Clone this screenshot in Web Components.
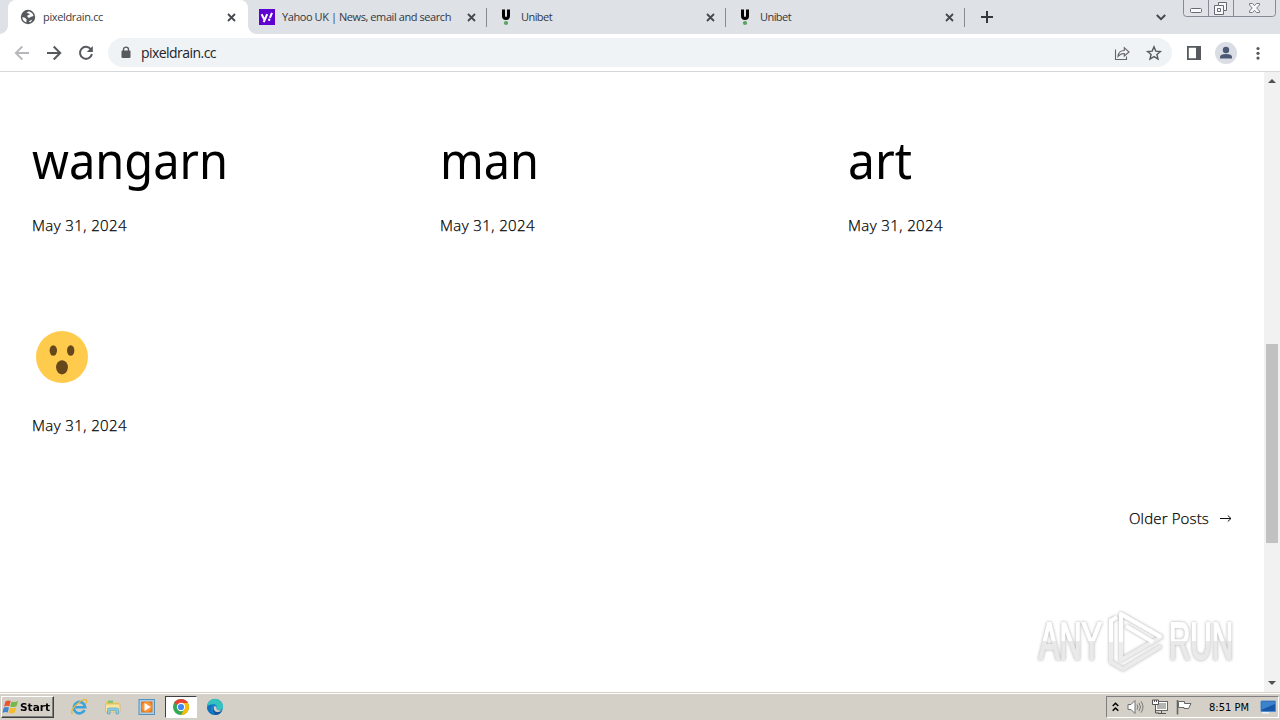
<!DOCTYPE html>
<html lang="en">
<head>
<meta charset="utf-8">
<title>pixeldrain.cc</title>
<style>
  html, body { margin: 0; height: 100%; overflow: hidden; }
  body { font-family: "Noto Sans", "Open Sans", sans-serif; background: #fff; }
</style>
</head>
<body>
<desktop-screen>
  <tab-strip slot="browser">
    <browser-tab active icon="globe" label="pixeldrain.cc" fit="60"></browser-tab>
    <browser-tab icon="yahoo" label="Yahoo UK | News, email and search" fit="169"></browser-tab>
    <browser-tab icon="unibet" label="Unibet" fit="31"></browser-tab>
    <browser-tab icon="unibet" label="Unibet" fit="31"></browser-tab>
  </tab-strip>
  <browser-toolbar slot="browser">pixeldrain.cc</browser-toolbar>
  <page-view slot="browser">
    <post-card date="May 31, 2024"><fit-text stretch width="196">wangarn</fit-text></post-card>
    <post-card date="May 31, 2024"><fit-text stretch width="99">man</fit-text></post-card>
    <post-card date="May 31, 2024"><fit-text stretch width="64">art</fit-text></post-card>
    <post-card date="May 31, 2024"><ui-icon name="wow"></ui-icon></post-card>
    <fit-text slot="older" width="80">Older Posts</fit-text>
  </page-view>
  <task-bar slot="taskbar"></task-bar>
</desktop-screen>

<script>
const ICONS = {
  globe: [16, 16, `<circle cx="8" cy="8" r="7.2" fill="#56595d"/>
    <path d="M2.3 8.2 4.5 8.5 6.6 10.3 6.3 13.4Q2.5 12 2.3 8.2ZM6.5 3.8 9 2.3 12.3 4.3 13.6 7.1 11.1 7.8 9 9.1 7.3 7.8 7.6 6.2 9.7 5.8 9.3 4.7ZM8.8 12.7 10.6 11.2 12.5 10.8 10.3 13.3Z" fill="#fff"/>`],
  yahoo: [16, 16, `<path d="M0 0H16V16H0Z" fill="#5f01d1"/><path d="M2.6 5.2 5.2 10.4M8.2 5.2 4.7 13.2M10.9 8.8 13 3.8" fill="none" stroke="#fff" stroke-width="2.1"/><circle cx="10.2" cy="10.7" r="1.2" fill="#fff"/>`],
  unibet: [16, 16, `<path d="M4 .5H7V6.5Q7 8 8 8T9 6.5V.5H12V7Q12 11 8 11T4 7Z"/><circle cx="8" cy="14" r="2.1" fill="#57a45f"/>`],
  close: [9, 9, `<path d="M1 1 8 8M8 1 1 8" stroke="#45484d" stroke-width="1.8"/>`],
  plus: [12, 12, `<path d="M6 0V12M0 6H12" stroke="#34373d" stroke-width="2"/>`],
  chevron: [10, 7, `<path d="M.8 1 5 5.2 9.2 1" fill="none" stroke="#42454c" stroke-width="1.9"/>`],
  back: [16, 16, `<path d="M15 8H2M8.3 1.5 1.8 8 8.3 14.5" fill="none" stroke="#b5b7ba" stroke-width="1.8"/>`],
  forward: [16, 16, `<path d="M1 8H14M7.7 1.5 14.2 8 7.7 14.5" fill="none" stroke="#56595d" stroke-width="2"/>`],
  reload: [16, 16, `<path d="M13 4.5A6 6 0 1 0 13.9 9" fill="none" stroke="#56595d" stroke-width="2"/><path d="M14.8 1V7H8.8Z" fill="#56595d"/>`],
  lock: [10, 13, `<path d="M2.5 5V3.6a2.5 2.5 0 0 1 5 0V5" fill="none" stroke="#56595d" stroke-width="1.4"/><rect x=".5" y="4.6" width="9" height="7.4" rx="1" fill="#56595d"/>`],
  share: [16, 16, `<path d="M1.5 4.5V14.5H12.5V11.5M4 11.5Q4.5 5.5 10.3 5.5V2.7L15 7 10.3 11V8.5Q6.4 8.4 4 11.5Z" fill="none" stroke="#62656a" stroke-width="1.1"/>`],
  star: [16, 16, `<path d="m8 1.8 1.8 4.3 4.6.4-3.5 3 1.1 4.6L8 11.6l-4 2.5 1.1-4.6-3.5-3 4.6-.4Z" fill="none" stroke="#56595d" stroke-width="1.4"/>`],
  panel: [14, 14, `<path d="M.9.9H13.1V13.1H.9Z" fill="#fff" stroke="#56595d" stroke-width="1.8"/><path d="M9 0H14V14H9Z" fill="#56595d"/>`],
  avatar: [22, 22, `<circle cx="11" cy="11" r="11" fill="#dadde3"/><circle cx="11" cy="8" r="3.2" fill="#4d5874"/><path d="M5 16.5V15Q5 12 11 12T17 15V16.5Z" fill="#4d5874"/>`],
  dots: [4, 14, `<circle cx="2" cy="2.5" r="1.6" fill="#56595d"/><circle cx="2" cy="7.3" r="1.6" fill="#56595d"/><circle cx="2" cy="12.1" r="1.6" fill="#56595d"/>`],
  windowbuttons: [97, 17, `<path d="M.5 0V13.5Q.5 16.5 3.5 16.5H89.5Q92.5 16.5 92.5 13.5V0" fill="#e0e2e7" stroke="#868a94"/><path d="M25.5 0V16M50.5 0V16" stroke="#868a94"/>
    <rect x="7.5" y="8.5" width="11" height="4" rx="1" fill="#f8f9fa" stroke="#666a73"/>
    <path d="M35.5 2.5H43.5V10.5H40.5V14.5H31.5V5.5H35.5Z" fill="#f8f9fa" stroke="#666a73"/><path d="M35.5 5.5H40.5V10.5M34.5 8.5H37.5V11.5H34.5Z" fill="none" stroke="#666a73"/>
    <path d="M66.5 3.5H69.5L71.5 5.7 73.5 3.5H76.5V5L73.7 8 76.5 11V12.5H73.5L71.5 10.3 69.5 12.5H66.5V11L69.3 8 66.5 5Z" fill="#f8f9fa" stroke="#777b84"/>`],
  wow: [52, 52, `<circle cx="26" cy="26" r="26" fill="#ffcb4c"/><ellipse cx="17.3" cy="19.5" rx="3.7" ry="5.2" fill="#65471b"/><ellipse cx="34.7" cy="19.5" rx="3.7" ry="5.2" fill="#65471b"/><ellipse cx="26" cy="36.3" rx="5.9" ry="7.1" fill="#65471b"/>`],
  arrow: [12, 9, `<path d="M0 4.5H11M7.8 1.5 11 4.5 7.8 7.5" fill="none" stroke="#111"/>`],
  up: [8, 4, `<path d="M4 0 8 4H0Z" fill="#505050"/>`],
  down: [8, 4, `<path d="M0 0H8L4 4Z" fill="#505050"/>`],
  windows: [16, 16, `<path d="M2.5 2.5Q5 .8 7.7 2L6.3 7.2Q3.8 6 1 7.7Z" fill="#e8552d"/><path d="M8.7 2.4Q11.5 3.8 15 2L13.5 7.3Q10.4 8.8 7.2 7.5Z" fill="#75b843"/><path d="M.7 8.8Q3.5 7.2 6 8.4L4.7 13.4Q2 12.4-.5 14Z" fill="#3f86cf"/><path d="M7 8.7Q10 10 13.2 8.5L11.8 13.6Q8.8 15.2 5.6 13.7Z" fill="#f5bd2c"/>`],
  ie: [18, 18, `<path d="M14.6 12.2A5.7 5.7 0 1 1 15.2 9.3H4.5" fill="none" stroke="#3ba2dc" stroke-width="2.6"/><path d="M2.6 16Q-.3 13.3 6 7T16.2 1.7Q17.7 3 15.3 6" fill="none" stroke="#e5b83d" stroke-width="1.3"/>`],
  folder: [18, 18, `<path d="M2 3H7L8 4.5H15.5V13H2Z" fill="#edca63"/><path d="M4 2.5H9V5H4Z" fill="#7fc577"/><path d="M1.5 6H16V14H1.5Z" fill="#f8e6a0" stroke="#d9b354" stroke-width=".7"/><path d="M3.5 16V11.5Q3.5 10 5 10H13Q14.5 10 14.5 11.5V16H12V12.5H6V16Z" fill="#8acbe9" stroke="#529dbf" stroke-width=".6"/>`],
  player: [18, 18, `<rect x="1" y="1.5" width="15.5" height="15" fill="#a8cee9" stroke="#5591bd"/><rect x="3" y="3.5" width="11.5" height="11" fill="#e8781a"/><circle cx="8.8" cy="9" r="5" fill="#f9963a"/><path d="M6.5 5 12.7 9 6.5 13Z" fill="#fff"/>`],
  chrome: [18, 18, `<circle cx="9" cy="9" r="8" fill="#34a853"/><path d="M9 9 2.1 5A8 8 0 0 1 15.9 5Z" fill="#e94235"/><path d="M9 9 9 5H15.9A8 8 0 0 1 9 17L12.4 11Z" fill="#fbbc05"/><circle cx="9" cy="9" r="4.2" fill="#fff"/><circle cx="9" cy="9" r="3.1" fill="#4285f4"/>`],
  edge: [18, 18, `<circle cx="9" cy="9" r="8" fill="#1686ce"/><path d="M1 9A8 8 0 0 1 17 8.5Q17 12 13 12 9.5 12 10.5 10 11.5 6.5 7.8 6 3.6 5.5 1 9Z" fill="#35c1bd"/><path d="M6.5 7.5Q2.5 12 8.5 16.9A8 8 0 0 1 1 9Q3 5.8 6.5 7.5Z" fill="#1271bc"/><path d="M10.5 10Q10 12.5 13 12.8 15 13 16.2 12.5A8 8 0 0 1 9 17Q5.3 12.3 8 9Z" fill="#1757a0"/><path d="M8.2 8.5Q10.5 7.5 10.5 10 10 12.8 15.8 12.5 11 15.5 8.4 12.5 7 10.3 8.2 8.5Z" fill="#d4d0c8"/>`],
  expand: [7, 10, `<path d="M.7 4 3.5 1.3 6.3 4M.7 8.8 3.5 6 6.3 8.8" fill="none" stroke="#000" stroke-width="1.5"/>`],
  sound: [17, 16, `<path d="M1 5.5H4L8 1.5V14.5L4 10.5H1Z" fill="#fff" stroke="#707070"/><path d="M10 5.5Q12 8 10 10.5M12 3.8Q15 8 12 12.2M14 2.3Q18 8 14 13.7" fill="none" stroke="#777"/>`],
  network: [16, 16, `<rect x="4.5" y="3.5" width="11" height="8" fill="#b3b3b1"/><rect x="3.5" y="2.5" width="12" height="9" fill="none" stroke="#666"/><rect x="4.5" y="3.5" width="10" height="7" fill="none" stroke="#fff"/><path d="M6 14.5H14M9.5 12V14" stroke="#555"/><path d="M.5 1H6.5V5.5H.5Z" fill="#fff" stroke="#555"/><path d="M2.5 1V3M4.5 1V3M3.5 6V14H7" fill="none" stroke="#555"/>`],
  flag: [16, 16, `<path d="M1.5 1V15.5" stroke="#666" stroke-width="1.6"/><path d="M2.5 2.5H8.5V4.5L15 4.5 12.5 9.5H8V8.5H2.5Z" fill="#fff" stroke="#666"/>`],
  desktop: [16, 14, `<path d="M1 1H15.5V11.5H1Z" fill="#1956a8" stroke="#548fce"/><path d="M2 2H15V4L2 9.5Z" fill="#3c83ce"/><path d="M2 12.8H9" stroke="#e9f1f9" stroke-width="1.5"/>`]
};

class UiIcon extends HTMLElement {
  connectedCallback() {
    const [w, h, art] = ICONS[this.getAttribute("name")];
    const root = this.attachShadow({ mode: "open" });
    root.innerHTML = `
      <style>
        :host { display: block; flex: none; width: ${w}px; height: ${h}px; }
        svg { display: block; overflow: visible; }
      </style>
      <svg width="${w}" height="${h}" viewBox="0 0 ${w} ${h}">${art}</svg>`;
  }
}

// Fits its text to the width attribute: by tracking, or by scaling with "stretch".
class FitText extends HTMLElement {
  connectedCallback() {
    const root = this.attachShadow({ mode: "open" });
    root.innerHTML = `
      <style>
        :host { display: inline-block; flex: none; white-space: nowrap; }
        span { display: inline-block; transform-origin: 0 0; }
      </style>
      <span><slot></slot></span>`;
    this.fit();
  }
  fit() {
    const span = this.shadowRoot.querySelector("span");
    const width = Number(this.getAttribute("width"));
    const natural = span.getBoundingClientRect().width;
    if (!natural) return;
    if (this.hasAttribute("stretch")) {
      span.style.transform = `scaleX(${width / natural})`;
    } else {
      span.style.letterSpacing = (width - natural) / this.textContent.length + "px";
    }
    this.style.width = width + "px";
  }
}

class DesktopScreen extends HTMLElement {
  constructor() {
    super();
    this.attachShadow({ mode: "open" }).innerHTML = `
      <style>
        :host { display: flex; flex-direction: column; width: 1280px; height: 720px; overflow: hidden; }
        .browser { flex: 1; min-height: 0; display: flex; flex-direction: column; }
      </style>
      <div class="browser"><slot name="browser"></slot></div>
      <slot name="taskbar"></slot>`;
  }
}

class TabStrip extends HTMLElement {
  constructor() {
    super();
    this.attachShadow({ mode: "open" }).innerHTML = `
      <style>
        :host { display: flex; box-sizing: border-box; flex: none; height: 34px; padding-left: 8px; background: #dee1e6; }
        .new { padding: 11px 0 0 16px; }
        .search { margin-left: auto; padding: 14px 17px 0 0; }
      </style>
      <slot></slot>
      <ui-icon class="new" name="plus"></ui-icon>
      <ui-icon class="search" name="chevron"></ui-icon>
      <ui-icon name="windowbuttons"></ui-icon>`;
  }
}

class BrowserTab extends HTMLElement {
  connectedCallback() {
    const root = this.attachShadow({ mode: "open" });
    root.innerHTML = `
      <style>
        :host { display: flex; align-items: center; box-sizing: border-box; width: 239px; height: 34px; padding: 0 11px; font: 11px "Open Sans", sans-serif; color: #34383e; background: linear-gradient(#868a91, #868a91) right 8px / 1px 19px no-repeat; }
        :host([active]) { position: relative; width: 240px; padding: 0 12px; border-radius: 8px 8px 0 0; background: #fff; color: #3a3d41; }
        :host([active])::before, :host([active])::after { content: ""; position: absolute; bottom: 0; width: 8px; height: 8px; }
        :host([active])::before { left: -8px; background: radial-gradient(circle at 0 0, #dee1e6 7.5px, #fff 8px); }
        :host([active])::after { right: -8px; background: radial-gradient(circle at 100% 0, #dee1e6 7.5px, #fff 8px); }
        fit-text { margin: -2px 0 0 7px; }
        .close { margin-left: auto; }
      </style>
      <ui-icon name="${this.getAttribute("icon")}"></ui-icon>
      <fit-text width="${this.getAttribute("fit")}">${this.getAttribute("label")}</fit-text>
      <ui-icon class="close" name="close"></ui-icon>`;
  }
}

class BrowserToolbar extends HTMLElement {
  constructor() {
    super();
    this.attachShadow({ mode: "open" }).innerHTML = `
      <style>
        :host { display: flex; align-items: center; flex: none; box-sizing: border-box; height: 38px; padding: 0 20px 0 14px; border-bottom: 1px solid #d5d8db; background: #fff; }
        .nav { display: flex; flex: none; gap: 16px; width: 94px; }
        .box { display: flex; flex: none; align-items: center; box-sizing: border-box; width: 1064px; height: 29px; padding: 0 10px 0 13px; border-radius: 15px; background: #f0f3f6; font: 14px "Open Sans", sans-serif; color: #202327; }
        .box fit-text { margin: 0 auto 0 10px; }
        .box ui-icon + ui-icon { margin-left: 16px; }
        .tools { display: flex; align-items: center; gap: 14px; margin-left: 15px; }
        .tools ui-icon:last-child { margin-left: 5px; }
      </style>
      <div class="nav"><ui-icon name="back"></ui-icon><ui-icon name="forward"></ui-icon><ui-icon name="reload"></ui-icon></div>
      <div class="box">
        <ui-icon name="lock"></ui-icon>
        <fit-text width="75">pixeldrain.cc</fit-text>
        <ui-icon name="share"></ui-icon><ui-icon name="star"></ui-icon>
      </div>
      <div class="tools"><ui-icon name="panel"></ui-icon><ui-icon name="avatar"></ui-icon><ui-icon name="dots"></ui-icon></div>`;
  }
}

class PageView extends HTMLElement {
  constructor() {
    super();
    this.attachShadow({ mode: "open" }).innerHTML = `
      <style>
        :host { flex: 1; min-height: 0; display: flex; position: relative; background: #fff; color: #000; }
        main { flex: 1; padding: 54px 32px 0; }
        .posts { display: grid; grid-template-columns: repeat(3, 384px); grid-auto-rows: 200px; column-gap: 24px; }
        .older { display: flex; align-items: center; justify-content: flex-end; gap: 11px; height: 22px; margin-top: -19px; font: 300 15px "Open Sans", sans-serif; -webkit-text-stroke: .25px #000; }
        .scroll { display: flex; flex-direction: column; align-items: center; box-sizing: border-box; width: 16px; padding: 7px 0; background: #f1f1f1; }
        .thumb { width: 12px; height: 199px; margin: 261px 0 auto; background: #c1c1c1; }
        watermark-logo { position: absolute; left: 1031px; top: 532px; }
      </style>
      <main>
        <div class="posts"><slot></slot></div>
        <div class="older"><slot name="older"></slot><ui-icon name="arrow"></ui-icon></div>
      </main>
      <div class="scroll"><ui-icon name="up"></ui-icon><div class="thumb"></div><ui-icon name="down"></ui-icon></div>
      <watermark-logo></watermark-logo>`;
  }
}

class PostCard extends HTMLElement {
  connectedCallback() {
    const root = this.attachShadow({ mode: "open" });
    root.innerHTML = `
      <style>
        :host { display: block; }
        h2 { display: flow-root; height: 87px; margin: 0; font: 400 51px/66px "Noto Sans", sans-serif; }
        time { display: block; font: 300 15px/24px "Open Sans", sans-serif; -webkit-text-stroke: .25px #000; }
        ::slotted(ui-icon) { margin: 5px 0 0 4px; }
      </style>
      <h2><slot></slot></h2>
      <time><fit-text width="95">${this.getAttribute("date")}</fit-text></time>`;
  }
}

class WatermarkLogo extends HTMLElement {
  constructor() {
    super();
    this.attachShadow({ mode: "open" }).innerHTML = `
      <style>
        :host { display: block; }
        svg { display: block; overflow: visible; filter: drop-shadow(0 0 1.5px #0005); }
        text { font: 400 51px "Liberation Sans", sans-serif; stroke-width: 2px; }
      </style>
      <svg width="230" height="76" viewBox="0 0 230 76">
        <defs>
          <linearGradient id="split" x1="0" y1="18" x2="0" y2="55" gradientUnits="userSpaceOnUse">
            <stop offset=".52" stop-color="#fff"/><stop offset=".52" stop-color="#e9e9e9"/>
          </linearGradient>
        </defs>
        <text x="8" y="55" textLength="63" lengthAdjust="spacingAndGlyphs" fill="url(#split)" stroke="url(#split)">ANY</text>
        <text x="138" y="55" textLength="64" lengthAdjust="spacingAndGlyphs" fill="url(#split)" stroke="url(#split)">RUN</text>
        <g fill="none" stroke-width="4" stroke-linejoin="round">
          <path d="M80 14V58L92 65 130 42" stroke="#ebebeb"/>
          <path d="M90 10V56L130 33Z" stroke="#ededed"/>
          <path d="M80 38V17L86 13M90 38V10L130 33M95 22 122 38" stroke="#fff"/>
        </g>
      </svg>`;
  }
}

class TaskBar extends HTMLElement {
  constructor() {
    super();
    this.attachShadow({ mode: "open" }).innerHTML = `
      <style>
        :host { display: flex; align-items: center; flex: none; box-sizing: border-box; height: 28px; padding: 1px 1px 0; border-top: 1px solid #d4d0c8; background: #d4d0c8; box-shadow: inset 0 1px #fff; color: #000; }
        .start { display: flex; align-items: center; gap: 1px; box-sizing: border-box; width: 53px; height: 22px; padding-left: 1px; border: 1px solid; border-color: #fff #404040 #404040 #fff; box-shadow: inset -1px -1px #808080; font: bold 11px "DejaVu Sans", sans-serif; }
        .apps { display: flex; margin-left: 9px; }
        .apps div { display: grid; place-items: center; box-sizing: border-box; width: 32px; height: 22px; margin-right: 2px; }
        .apps .on { background: #fff; border: 1px solid; border-color: #404040 #fff #fff #404040; }
        .tray { display: flex; align-items: center; box-sizing: border-box; width: 173px; height: 22px; margin-left: auto; padding: 0 2px 0 5px; border: 1px solid; border-color: #808080 #fff #fff #808080; font: 11px "DejaVu Sans Condensed", "DejaVu Sans", sans-serif; }
        .tray ui-icon { margin-right: 8px; }
        .tray fit-text { margin: 0 auto 0 9px; }
        .tray ui-icon:last-child { margin: 0; }
      </style>
      <div class="start"><ui-icon name="windows"></ui-icon><fit-text stretch width="30">Start</fit-text></div>
      <div class="apps">
        <div><ui-icon name="ie"></ui-icon></div>
        <div><ui-icon name="folder"></ui-icon></div>
        <div><ui-icon name="player"></ui-icon></div>
        <div class="on"><ui-icon name="chrome"></ui-icon></div>
        <div><ui-icon name="edge"></ui-icon></div>
      </div>
      <div class="tray">
        <ui-icon name="expand"></ui-icon><ui-icon name="sound"></ui-icon><ui-icon name="network"></ui-icon><ui-icon name="flag"></ui-icon>
        <fit-text width="40">8:51 PM</fit-text>
        <ui-icon name="desktop"></ui-icon>
      </div>`;
  }
}

customElements.define("desktop-screen", DesktopScreen);
customElements.define("tab-strip", TabStrip);
customElements.define("browser-tab", BrowserTab);
customElements.define("browser-toolbar", BrowserToolbar);
customElements.define("page-view", PageView);
customElements.define("post-card", PostCard);
customElements.define("watermark-logo", WatermarkLogo);
customElements.define("task-bar", TaskBar);
customElements.define("ui-icon", UiIcon);
customElements.define("fit-text", FitText);
</script>
</body>
</html>
